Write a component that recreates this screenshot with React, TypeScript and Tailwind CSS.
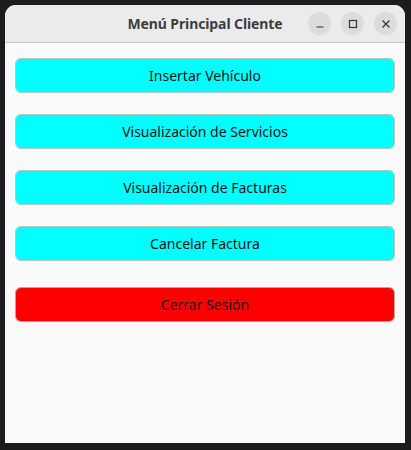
import * as React from 'react';

const options = [
  'Insertar Vehículo',
  'Visualización de Servicios',
  'Visualización de Facturas',
  'Cancelar Factura',
];

const WinButton = ({ children }: { children: React.ReactNode }) => (
  <div className="w-[23px] h-[23px] rounded-full bg-[#dcdcdc] flex items-center justify-center text-[#333]">
    {children}
  </div>
);

export default function App() {
  return (
    <div
      className="w-[411px] h-[450px] bg-[#1c1c1e] pt-[5px] px-[5px] overflow-hidden"
      style={{ fontFamily: '"Noto Sans", "Open Sans", sans-serif' }}>
      <div className="w-[400px] h-[438px] flex flex-col rounded-t-[11px] overflow-hidden bg-[#fafafa]">
        {/* barra de título */}
        <div className="h-[38px] shrink-0 bg-[#ebebeb] border-b border-[#c4c4c4] relative flex items-center justify-center">
          <p className="text-[14px] font-bold text-[#3d3d3d] tracking-[-0.1px]">Menú Principal Cliente</p>
          <div className="absolute right-[8px] top-[7px] flex gap-[10px]">
            <WinButton>
              <svg width="10" height="10" viewBox="0 0 10 10">
                <path d="M1.5 8h7" stroke="currentColor" strokeWidth="1.2" />
              </svg>
            </WinButton>
            <WinButton>
              <svg width="10" height="10" viewBox="0 0 10 10">
                <rect x="1.5" y="1.5" width="7" height="7" fill="none" stroke="currentColor" strokeWidth="1.2" />
              </svg>
            </WinButton>
            <WinButton>
              <svg width="10" height="10" viewBox="0 0 10 10">
                <path d="M1.5 1.5l7 7M8.5 1.5l-7 7" stroke="currentColor" strokeWidth="1.2" />
              </svg>
            </WinButton>
          </div>
        </div>

        {/* menú */}
        <div className="flex flex-col px-[10px] pt-[15px]">
          {options.map((label) => (
            <button
              key={label}
              className="h-[35px] mb-[21px] rounded-[6px] bg-[#00ffff] border border-[#b4c8c8] text-[14px] text-[#111]">
              {label}
            </button>
          ))}
          <button className="h-[35px] mt-[5px] rounded-[6px] bg-[#ff0000] border border-[#c8a0a0] text-[14px] text-[#111]">
            Cerrar Sesión
          </button>
        </div>
      </div>
    </div>
  );
}
